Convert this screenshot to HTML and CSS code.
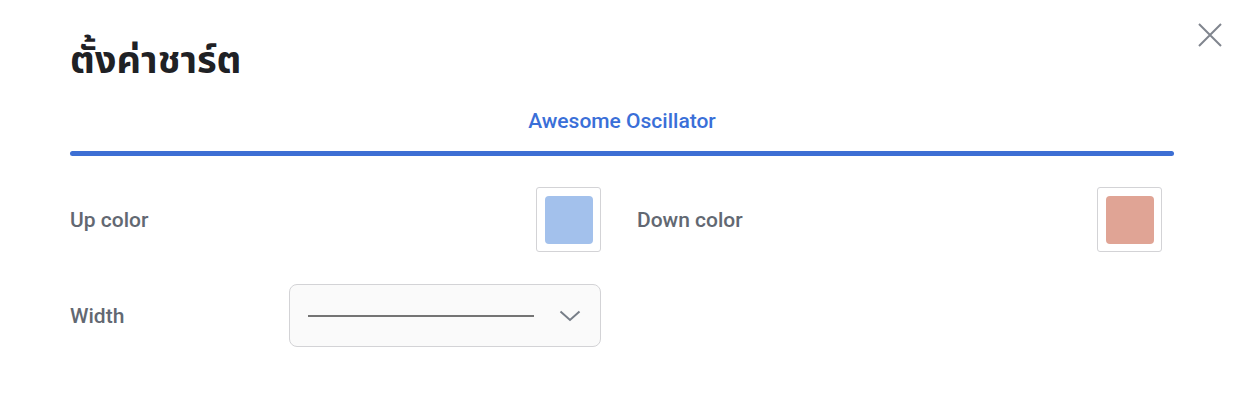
FILE: index.html
```html
<!DOCTYPE html>
<html lang="th">
<head>
<meta charset="utf-8">
<link rel="stylesheet" href="styles.css">
</head>
<body>
<div class="dialog">
  <button class="close" aria-label="close">
    <svg width="26" height="26" viewBox="0 0 26 26"><path d="M2 2 L24 24 M24 2 L2 24" stroke="#80858e" stroke-width="2" fill="none"/></svg>
  </button>
  <h1 class="title">ตั้งค่าชาร์ต</h1>
  <div class="tabs">
    <div class="tab">Awesome Oscillator</div>
    <div class="tab-bar"></div>
  </div>
  <div class="grid">
    <div class="field left">
      <span class="label">Up color</span>
      <div class="swatch"><div class="chip up"></div></div>
    </div>
    <div class="field right">
      <span class="label">Down color</span>
      <div class="swatch"><div class="chip down"></div></div>
    </div>
    <div class="field left width-row">
      <span class="label">Width</span>
      <div class="select">
        <div class="line"></div>
        <svg class="chev" width="22" height="12" viewBox="0 0 22 12"><path d="M1.5 1.5 L11 10 L20.5 1.5" stroke="#777e88" stroke-width="2" fill="none"/></svg>
      </div>
    </div>
  </div>
</div>
</body>
</html>
```
FILE: styles.css
```css
html, body {
  margin: 0;
  padding: 0;
  background: #ffffff;
}
body {
  font-family: Roboto, "Noto Sans", "Noto Sans Thai", sans-serif;
  width: 1240px;
  height: 410px;
  overflow: hidden;
}
.dialog {
  position: relative;
  padding: 36px 66px 0 70px;
}
.close {
  position: absolute;
  top: 22px;
  right: 17px;
  border: 0;
  background: none;
  padding: 0;
  width: 26px;
  height: 26px;
  cursor: pointer;
}
.title {
  margin: 0;
  font-family: "Noto Sans Thai", "Noto Sans", "Liberation Sans", sans-serif;
  font-size: 38px;
  font-weight: 700;
  color: #1f2125;
  line-height: 52px;
}
.tabs {
  margin-top: 19px;
}
.tab {
  text-align: center;
  font-size: 21px;
  font-weight: 500;
  color: #3a6fd8;
  line-height: 28px;
}
.tab-bar {
  margin-top: 16px;
  height: 5px;
  border-radius: 3px;
  background: #3d6fd4;
}
.grid {
  margin-top: 31px;
  display: grid;
  grid-template-columns: 531px 525px;
  column-gap: 36px;
  row-gap: 32px;
}
.field {
  display: flex;
  align-items: center;
  justify-content: space-between;
}
.label {
  font-size: 21px;
  font-weight: 500;
  color: #626872;
}
.swatch {
  width: 63px;
  height: 63px;
  border: 1px solid #d3d3d6;
  border-radius: 3px;
  display: flex;
  align-items: center;
  justify-content: center;
}
.chip {
  width: 48px;
  height: 48px;
  border-radius: 4px;
}
.chip.up { background: #a3c1ec; }
.chip.down { background: #e0a495; }
.select {
  height: 61px;
  border: 1px solid #d3d3d6;
  border-radius: 8px;
  background: #fafafa;
  display: flex;
  align-items: center;
  padding: 0 19px 0 18px;
  box-sizing: content-box;
  width: 273px;
}
.line {
  width: 226px;
  height: 2px;
  background: #747474;
}
.chev {
  margin-left: auto;
}
```
